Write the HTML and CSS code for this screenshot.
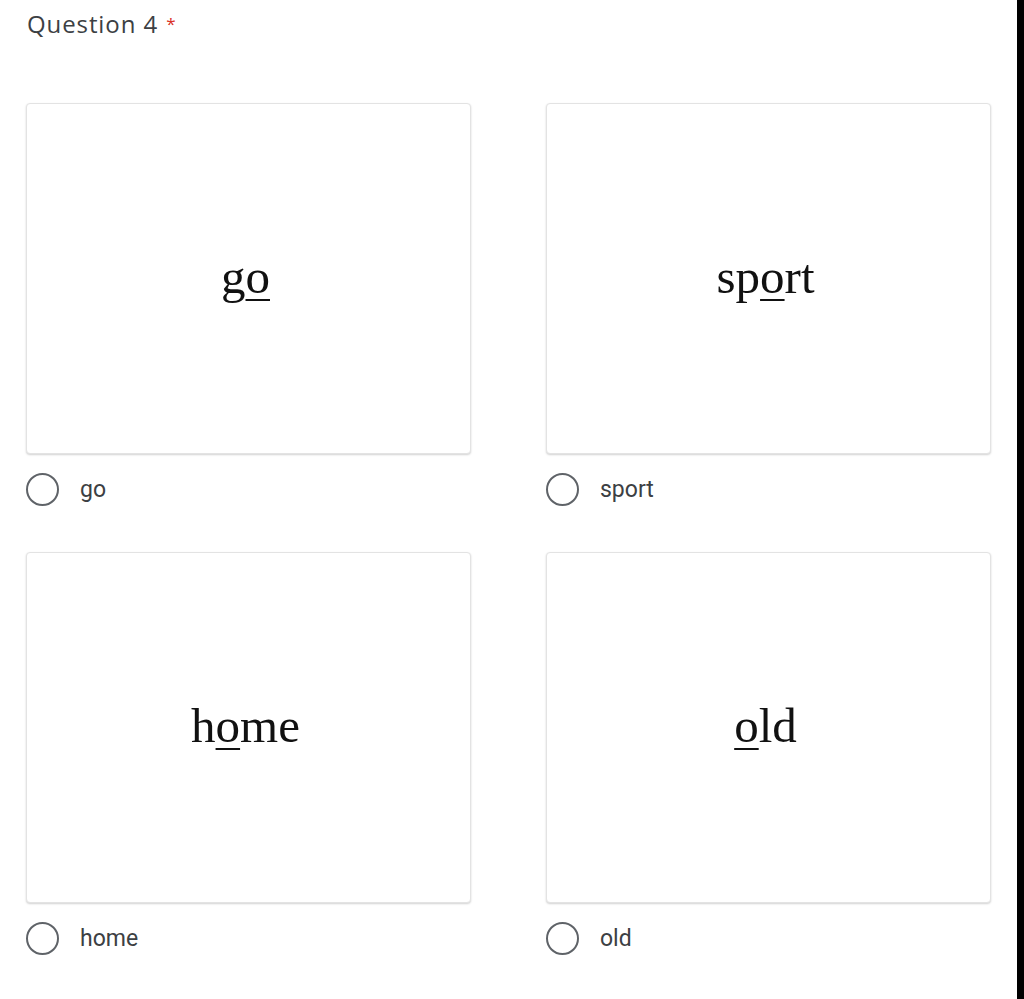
FILE: index.html
```html
<!DOCTYPE html>
<html lang="en">
<head>
    <meta charset="UTF-8">
    <meta name="viewport" content="width=device-width, initial-scale=1.0">
    <title>Question 4</title>
    <link rel="stylesheet" href="styles.css">
</head>
<body>
    <div class="page">
        <div class="form">
            <div class="question-title">Question 4 <span class="required">*</span></div>

            <div class="choices">
                <div class="choice">
                    <div class="card"><span class="word">g<u>o</u></span></div>
                    <label class="option"><span class="radio"></span>go</label>
                </div>
                <div class="choice">
                    <div class="card"><span class="word">sp<u>o</u>rt</span></div>
                    <label class="option"><span class="radio"></span>sport</label>
                </div>
                <div class="choice">
                    <div class="card"><span class="word">h<u>o</u>me</span></div>
                    <label class="option"><span class="radio"></span>home</label>
                </div>
                <div class="choice">
                    <div class="card"><span class="word"><u>o</u>ld</span></div>
                    <label class="option"><span class="radio"></span>old</label>
                </div>
            </div>
        </div>
        <div class="scrollbar"></div>
    </div>
</body>
</html>
```

FILE: styles.css
```css
/* Google Forms style image question */
html, body {
    margin: 0;
    height: 100%;
}

body {
    background-color: #fff;
    font-family: Roboto, "Open Sans", sans-serif;
    color: #202124;
}

.page {
    display: flex;
    height: 999px;
}

.form {
    flex: 1;
    padding: 8px 0 0 26px;
}

.scrollbar {
    width: 7px;
    background-color: #000;
}

.question-title {
    font-family: "Open Sans", Roboto, sans-serif;
    font-size: 24px;
    letter-spacing: 0.9px;
    color: #3c4043;
    padding-left: 1px;
    line-height: 32px;
}

.required {
    color: #d93025;
    font-size: 17px;
    vertical-align: top;
    margin-left: 1px;
}

.choices {
    display: grid;
    grid-template-columns: 445px 445px;
    column-gap: 75px;
    row-gap: 46px;
    margin-top: 63px;
}

.card {
    height: 349px;
    border: 1px solid #e3e3e3;
    border-radius: 4px;
    box-shadow: 0 1px 2px rgba(0, 0, 0, 0.18);
    display: flex;
    align-items: center;
    justify-content: center;
    background-color: #fff;
}

.word {
    font-family: "Liberation Serif", "Times New Roman", serif;
    font-size: 49px;
    color: #111;
    margin-top: -4px;
    margin-right: 6px;
}

.word u {
    text-decoration-thickness: 2px;
    text-underline-offset: 6px;
}

.option {
    display: flex;
    align-items: center;
    gap: 21px;
    margin-top: 19px;
    font-size: 23px;
    color: #3c4043;
}

.radio {
    width: 29px;
    height: 29px;
    border: 2.5px solid #5f6368;
    border-radius: 50%;
    flex-shrink: 0;
}
```
